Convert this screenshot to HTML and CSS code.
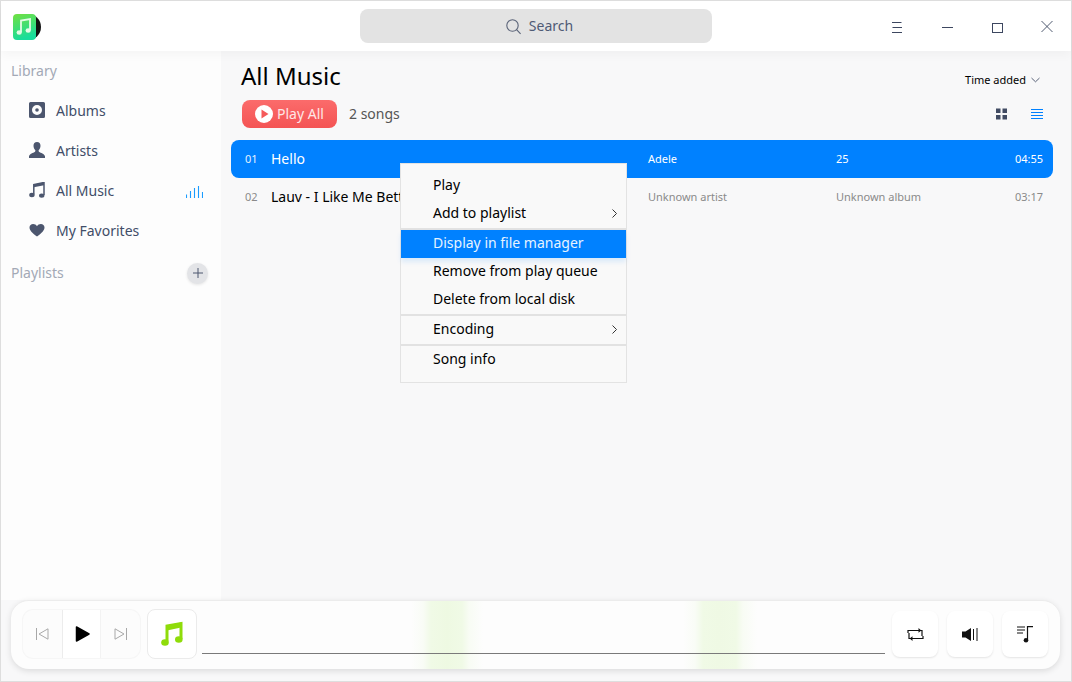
FILE: index.html
```html
<!DOCTYPE html>
<html lang="en">
<head>
<meta charset="utf-8">
<title>Music</title>
<link rel="stylesheet" href="styles.css">
</head>
<body>
<div class="window">
  <header class="titlebar">
    <div class="title-left">
      <svg class="logo" width="30" height="28" viewBox="0 0 30 28">
        <defs><linearGradient id="lg" x1="0" y1="0" x2="0.3" y2="1"><stop offset="0" stop-color="#72e040"/><stop offset="1" stop-color="#18dd9c"/></linearGradient></defs>
        <circle cx="15" cy="14" r="13" fill="#111"/>
        <rect x="0" y="1" width="23" height="26" rx="4" fill="url(#lg)"/>
        <path d="M8 19V7.5l9-1.5v11" fill="none" stroke="#e4fbe6" stroke-width="1.8"/>
        <ellipse cx="6.2" cy="19.5" rx="2.6" ry="2.2" fill="#e4fbe6"/>
        <ellipse cx="15.2" cy="17.5" rx="2.6" ry="2.2" fill="#e4fbe6"/>
      </svg>
    </div>
    <div class="search">
      <svg width="17" height="17" viewBox="0 0 17 17"><circle cx="7.5" cy="7.5" r="5.7" fill="none" stroke="#5a6378" stroke-width="1.1"/><path d="M11.6 11.6l4 4.2" stroke="#5a6378" stroke-width="1.1"/></svg>
      <span>Search</span>
    </div>
    <div class="controls">
      <button class="ctl"><svg width="12" height="14" viewBox="0 0 12 14"><path d="M1 3.500h9.500M1.500 8.500h9.500M1 13.500h10" stroke="#3d4760" stroke-width="1"/></svg></button>
      <button class="ctl"><svg width="12" height="14" viewBox="0 0 12 14"><path d="M1 8.500h11" stroke="#3d4760" stroke-width="1"/></svg></button>
      <button class="ctl"><svg width="12" height="14" viewBox="0 0 12 14"><rect x="1.500" y="4.500" width="10" height="9" fill="none" stroke="#3d4760" stroke-width="1"/></svg></button>
      <button class="ctl last"><svg width="12" height="14" viewBox="0 0 12 14"><path d="M.5 2l11 11M11.500 2l-11 11" stroke="#3d4760" stroke-width="0.9"/></svg></button>
    </div>
  </header>

  <div class="body">
    <aside class="sidebar">
      <div class="side-head">Library</div>
      <nav class="side-list">
        <div class="side-item">
          <svg width="16" height="16" viewBox="0 0 16 16"><path fill-rule="evenodd" d="M1.5 0h13A1.5 1.5 0 0 1 16 1.5v13a1.500 1.500 0 0 1-1.500 1.500h-13A1.500 1.500 0 0 1 0 14.500v-13A1.500 1.500 0 0 1 1.500 0zM8 3a5 5 0 1 0 0 10A5 5 0 0 0 8 3z" fill="#4c566e"/><circle cx="8" cy="8" r="1.800" fill="#4c566e"/></svg>
          <span>Albums</span>
        </div>
        <div class="side-item">
          <svg width="16" height="16" viewBox="0 0 16 16"><path d="M8 0c2.300 0 3.500 1.700 3.500 3.800 0 1.700-.8 3.400-1.700 4.300-.4.500-.2 1.400.4 1.800 1.400.8 5.300 1.700 5.800 4.300V16H0v-1.800c.5-2.600 4.400-3.500 5.800-4.300.6-.4.800-1.300.4-1.800-.9-.9-1.700-2.600-1.700-4.300C4.500 1.700 5.700 0 8 0z" fill="#4c566e"/></svg>
          <span>Artists</span>
        </div>
        <div class="side-item">
          <svg width="16" height="16" viewBox="0 0 16 16"><path d="M4.800 12.500V2.500L15 .5V13" fill="none" stroke="#4c566e" stroke-width="1.500"/><path d="M4.800 2.500L15 .5v2.800L4.800 5.300z" fill="#4c566e"/><ellipse cx="2.900" cy="13" rx="2.700" ry="2.200" fill="#4c566e"/><ellipse cx="12.700" cy="13.600" rx="2.700" ry="2.200" fill="#4c566e"/></svg>
          <span class="grow">All Music</span>
          <svg class="bars" width="17" height="12" viewBox="0 0 17 12"><path d="M.5 12V8.500M4.500 12V5M8.500 12V2M12.500 12V0M16.500 12V6" stroke="#1a9cff" stroke-width="1.100"/></svg>
        </div>
        <div class="side-item">
          <svg width="16" height="16" viewBox="0 0 16 16"><path d="M8 14.500C3 10.500.5 8.300.5 5.400.5 3.300 2.200 2 4.100 2 5.700 2 7.200 2.800 8 4.200 8.800 2.800 10.300 2 11.900 2c1.900 0 3.600 1.300 3.600 3.400 0 2.900-2.500 5.100-7.500 9.100z" fill="#4c566e"/></svg>
          <span>My Favorites</span>
        </div>
      </nav>
      <div class="side-head playlists">
        <span>Playlists</span>
        <span class="add"><svg width="10" height="10" viewBox="0 0 10 10"><path d="M5 0v10M0 5h10" stroke="#4c566e" stroke-width="1"/></svg></span>
      </div>
    </aside>

    <main class="content">
      <div class="head-row">
        <h1>All Music</h1>
        <div class="sort">Time added
          <svg width="9" height="6" viewBox="0 0 9 6"><path d="M.5 1l4 3.800 4-3.800" fill="none" stroke="#5a6378" stroke-width="1"/></svg>
        </div>
      </div>
      <div class="action-row">
        <button class="play-all">
          <svg width="18" height="18" viewBox="0 0 18 18"><circle cx="9" cy="9" r="9" fill="#fff"/><path d="M6.500 4.500l7 4.500-7 4.500z" fill="#f55a5a"/></svg>
          <span>Play All</span>
        </button>
        <span class="count">2 songs</span>
        <div class="views">
          <svg width="11" height="12" viewBox="0 0 11 12"><path d="M0 .5h4.500V5H0zM6.500 .5H11V5H6.500zM0 7h4.500v4.500H0zM6.500 7H11v4.500H6.500z" fill="#414b63"/></svg>
          <svg width="12" height="12" viewBox="0 0 12 12"><path d="M0 1.500h12M0 4.500h12M0 7.500h12M0 10.500h12" stroke="#0081ff" stroke-width="1"/></svg>
        </div>
      </div>
      <div class="rows">
        <div class="row active"><span class="num">01</span><span class="name">Hello</span><span class="artist">Adele</span><span class="album">25</span><span class="dur">04:55</span></div>
        <div class="row"><span class="num">02</span><span class="name">Lauv - I Like Me Better</span><span class="artist muted">Unknown artist</span><span class="album muted">Unknown album</span><span class="dur muted">03:17</span></div>
      </div>
    </main>
  </div>

  <footer class="footer">
    <div class="player">
      <div class="transport">
        <span class="t-btn"><svg width="13" height="12" viewBox="0 0 13 12"><path d="M.5 0v12M12 .8v10.400L3 6z" fill="none" stroke="#a8a8a8" stroke-width="1"/></svg></span>
        <span class="t-btn center"><svg width="15" height="16" viewBox="0 0 15 16"><path d="M1.500 1l12.500 7-12.500 7z" fill="#000" stroke="#000" stroke-width="1.500" stroke-linejoin="round"/></svg></span>
        <span class="t-btn"><svg width="13" height="12" viewBox="0 0 13 12"><path d="M12.500 0v12M1 .8v10.400L10 6z" fill="none" stroke="#a8a8a8" stroke-width="1"/></svg></span>
      </div>
      <div class="cover">
        <svg width="22" height="26" viewBox="0 0 22 26"><path d="M6 20.500V5L20 2.500V18" fill="none" stroke="#8fdc0a" stroke-width="3"/><path d="M6 4.500l14-3v5l-14 3z" fill="#8fdc0a"/><ellipse cx="4" cy="21.500" rx="3.800" ry="3.300" fill="#8fdc0a"/><ellipse cx="17.800" cy="18.500" rx="3.800" ry="3.300" fill="#8fdc0a"/></svg>
      </div>
      <div class="wave"></div>
      <button class="p-btn"><svg width="17" height="15" viewBox="0 0 17 15"><path d="M1 6V3.500h14V9M16 9v2.500H2V6" fill="none" stroke="#111" stroke-width="1.200"/><path d="M11.500 1l2.800 2.500-2.800 2.300zM5.500 9.200L2.700 11.500l2.800 2.500z" fill="#111"/></svg></button>
      <button class="p-btn"><svg width="16" height="13" viewBox="0 0 16 13"><path d="M0 3.500h3.500L9 0v13L3.500 9.500H0z" fill="#111"/><path d="M11.500 1v11M15 0v13" stroke="#111" stroke-width="1"/></svg></button>
      <button class="p-btn"><svg width="17" height="17" viewBox="0 0 17 17"><path d="M0 1h8M0 4h8M0 7h6" stroke="#111" stroke-width="1"/><path d="M10.500 14V.7H16" fill="none" stroke="#111" stroke-width="1.200"/><ellipse cx="9" cy="14.300" rx="2.300" ry="2.200" fill="#111"/></svg></button>
    </div>
  </footer>

  <div class="menu">
    <div class="mi">Play</div>
    <div class="mi">Add to playlist<svg width="5" height="9" viewBox="0 0 5 9"><path d="M.5.5l4 4-4 4" fill="none" stroke="#333" stroke-width="1"/></svg></div>
    <div class="sep first"></div>
    <div class="mi hl">Display in file manager</div>
    <div class="mi">Remove from play queue</div>
    <div class="mi">Delete from local disk</div>
    <div class="sep"></div>
    <div class="mi">Encoding<svg width="5" height="9" viewBox="0 0 5 9"><path d="M.5.5l4 4-4 4" fill="none" stroke="#333" stroke-width="1"/></svg></div>
    <div class="sep"></div>
    <div class="mi">Song info</div>
  </div>
</div>
</body>
</html>
```
FILE: styles.css
```css
* { box-sizing: border-box; }
html, body { margin: 0; padding: 0; height: 100%; overflow: hidden; }
body { font-family: "Noto Sans", sans-serif; font-size: 14px; color: #000; }
button { font: inherit; border: 0; padding: 0; background: none; }

.window {
  position: relative;
  width: 1072px; height: 682px;
  border: 1px solid #dedede;
  display: flex; flex-direction: column;
  background: #f8f8f9;
}

.titlebar {
  height: 50px; flex: none;
  background: #fff;
  display: flex; align-items: center;
  position: relative;
  z-index: 2;
  box-shadow: 0 4px 10px rgba(0,0,0,.035);
}
.title-left { width: 359px; padding-left: 12px; display: flex; align-items: center; }
.logo { display: block; margin-top: 1px; }
.search {
  width: 352px; height: 34px;
  background: #e3e3e3; border-radius: 8px;
  display: flex; align-items: center; justify-content: center; gap: 7px;
  color: #4f5a75;
  padding: 0 0 2px 6px;
}
.search svg { margin-top: 3px; }
.controls { margin-left: auto; display: flex; }
.ctl { width: 50px; height: 50px; display: flex; align-items: center; justify-content: center; }
.ctl.last { width: 49px; padding-left: 1px; }

.body { flex: 1; min-height: 0; display: flex; }

.sidebar { width: 220px; flex: none; background: #fdfdfd; padding-top: 8px; }
.side-head { height: 24px; line-height: 24px; padding-left: 10px; color: #a3a9b6; }
.side-list { margin-top: 7px; }
.side-item {
  height: 40px; display: flex; align-items: center; gap: 11px;
  padding: 0 18px 0 28px; color: #414d68;
}
.grow { flex: 1; }
.bars { margin-top: 4px; }
.playlists { display: flex; justify-content: space-between; align-items: center; margin-top: 11px; padding-right: 13px; height: 24px; }
.add {
  width: 21px; height: 21px; border-radius: 50%; background: #e3e4e7;
  box-shadow: 0 1px 3px rgba(0,0,0,.1);
  display: flex; align-items: center; justify-content: center;
}

.content { flex: 1; min-width: 0; padding: 0 18px 0 10px; }
.head-row { display: flex; justify-content: space-between; align-items: flex-start; padding: 7px 13px 0 10px; height: 49px; }
h1 { margin: 0; font-size: 24px; font-weight: 400; line-height: 36px; color: #000; }
.sort { font-size: 11px; line-height: 16px; margin-top: 14px; display: flex; align-items: center; gap: 5px; }
.sort svg { margin-top: -1px; }
.action-row { display: flex; align-items: center; padding-left: 11px; padding-right: 10px; height: 28px; }
.play-all {
  width: 95px; height: 28px; border-radius: 8px;
  background: linear-gradient(#fb6b6b, #f45454);
  color: #ffe6e6;
  display: flex; align-items: center; padding: 0 0 2px 13px; gap: 4px;
}
.play-all svg { margin-top: 2px; }
.count { margin-left: 12px; color: #555; padding-bottom: 2px; }
.views { margin-left: auto; display: flex; gap: 24px; align-items: center; }
.rows { margin-top: 12px; }
.row { height: 38px; display: flex; align-items: center; border-radius: 8px; padding-bottom: 2px; }
.row.active { background: #0081ff; color: #fff; }
.num { width: 40px; padding-left: 14px; font-size: 11px; color: #8a8a8a; }
.active .num { color: #e3f1ff; }
.name { width: 377px; white-space: nowrap; overflow: hidden; }
.artist { width: 188px; font-size: 11px; }
.album { flex: 1; font-size: 11px; }
.dur { padding-right: 10px; font-size: 11px; }
.muted { color: #8a8a8a; }

.footer { height: 81px; flex: none; padding: 0 11px 12px 10px; position: relative; z-index: 3; }
.player {
  height: 69px; border-radius: 18px;
  display: flex; align-items: center;
  padding: 0 12px 2px 12px;
  background:
    linear-gradient(90deg, transparent 400px, #f9fcf6 412px, #f0faE6 420px, #eef9e2 436px, #f0fae6 451px, #f8fcf4 458px, transparent 472px, transparent 672px, #f9fcf6 684px, #f0fae6 692px, #eff9e4 708px, #f0fae6 725px, #f8fcf4 732px, transparent 746px),
    #fdfdfd;
  box-shadow: 0 2px 6px rgba(0,0,0,.12);
  border-top: 1px solid #ececec;
}
.transport {
  width: 117px; height: 48px; display: flex; border-radius: 10px;
  background: #fcfcfc; box-shadow: 0 0 0 1px #f6f6f6; flex: none; overflow: hidden;
}
.t-btn { width: 39px; display: flex; align-items: center; justify-content: center; }
.t-btn.center { width: 40px; background: #fff; border-left: 1px solid #ececec; border-right: 1px solid #f3f3f3; padding-left: 2px; }
.cover {
  width: 50px; height: 50px; margin-left: 7px; border-radius: 8px; flex: none;
  border: 1px solid #ebebeb; background: #fff;
  display: flex; align-items: center; justify-content: center;
}
.wave { flex: 1; height: 1px; background: #7a7a7a; margin: 38px 7px 0 5px; }
.p-btn {
  width: 46px; height: 46px; border-radius: 8px; margin-left: 9px; flex: none;
  background: #fff; box-shadow: 0 1px 2px rgba(0,0,0,.1);
  display: flex; align-items: center; justify-content: center;
}
.p-btn:first-of-type { margin-left: 0; }

.menu {
  position: absolute; z-index: 5;
  left: 399px; top: 162px;
  width: 227px; height: 220px;
  background: #f9f9f9; border: 1px solid #e3e3e3;
  padding: 7px 0;
}
.mi {
  height: 28px; padding: 0 9px 2px 32px;
  display: flex; align-items: center; justify-content: space-between;
  color: #000;
}
.sep ~ .mi { padding-bottom: 4px; }
.mi svg { margin-top: 2px; }
.mi.hl { background: #0081ff; color: #e6f3ff; box-shadow: 0 4px 5px rgba(0,129,255,.12); }
.sep { height: 2px; background: #e2e2e2; }
.sep.first { margin-top: 1px; }
```
